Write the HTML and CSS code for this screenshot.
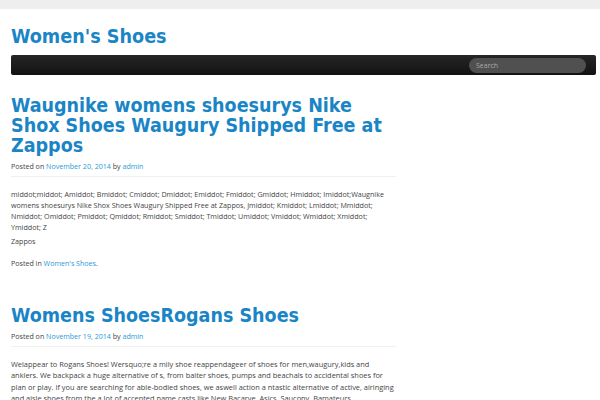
FILE: index.html
```html
<!DOCTYPE html>
<html>
<head>
<meta charset="utf-8">
<link rel="stylesheet" href="styles.css">
</head>
<body>
<div class="topbar"></div>
<div class="page">
  <header class="site-header">
    <h1 class="site-title">Women's Shoes</h1>
    <nav class="navbar">
      <div class="search">Search</div>
    </nav>
  </header>
  <main class="content">
    <article class="post">
      <h2 class="post-title">Waugnike womens shoesurys Nike Shox Shoes Waugury Shipped Free at Zappos</h2>
      <div class="meta">Posted on <a>November 20, 2014</a> by <a>admin</a></div>
      <div class="entry">
        <p>middot;middot; Amiddot; Bmiddot; Cmiddot; Dmiddot; Emiddot; Fmiddot; Gmiddot; Hmiddot; Imiddot;Waugnike womens shoesurys Nike Shox Shoes Waugury Shipped Free at Zappos, Jmiddot; Kmiddot; Lmiddot; Mmiddot; Nmiddot; Omiddot; Pmiddot; Qmiddot; Rmiddot; Smiddot; Tmiddot; Umiddot; Vmiddot; Wmiddot; Xmiddot; Ymiddot; Z</p>
        <p>Zappos</p>
      </div>
      <div class="footer-meta">Posted in <a>Women's Shoes</a>.</div>
    </article>
    <article class="post">
      <h2 class="post-title">Womens ShoesRogans Shoes</h2>
      <div class="meta">Posted on <a>November 19, 2014</a> by <a>admin</a></div>
      <div class="entry entry-wide">
        <p>Welappear to Rogans Shoes! Wersquo;re a mily shoe reappendageer of shoes for men,waugury,kids and anklers. We backpack a huge alternative of s, from baiter shoes, pumps and beachals to accidental shoes for plan or play. If you are searching for able-bodied shoes, we aswell action a ntastic alternative of active, airinging and aisle shoes from the a lot of accepted name casts like New Bacarve, Asics, Saucony, Bamateurs, Merrell&nbsp;and&nbsp;more.</p>
      </div>
    </article>
  </main>
</div>
</body>
</html>
```
FILE: styles.css
```css
html, body { margin: 0; padding: 0; background: #fff; }
body { font-family: "Open Sans", "DejaVu Sans", sans-serif; color: #444; height: 400px; overflow: hidden; }
.topbar { height: 9px; background: #eee; }
.page { padding: 0 4px 0 11px; }
.site-header { padding-top: 16px; }
.site-title {
  margin: 0;
  font-family: "DejaVu Sans Condensed", "DejaVu Sans", sans-serif;
  font-stretch: condensed;
  font-weight: bold;
  font-size: 19.6px;
  line-height: 24px;
  color: #1a85c6;
}
.navbar {
  margin-top: 6px;
  height: 20px;
  border-radius: 2px;
  background: linear-gradient(#262626, #121212);
  display: flex;
  justify-content: flex-end;
  align-items: center;
  padding-right: 10px;
}
.search {
  width: 110px;
  height: 15px;
  border-radius: 8px;
  background: #505050;
  color: #aaa;
  font-size: 7px;
  line-height: 15px;
  padding-left: 7px;
}
.content { width: 385px; padding-top: 21px; }
.post-title {
  margin: 0;
  font-family: "DejaVu Sans Condensed", "DejaVu Sans", sans-serif;
  font-stretch: condensed;
  font-weight: bold;
  font-size: 19.5px;
  line-height: 20px;
  color: #1a85c6;
}
.meta {
  font-size: 7.1px;
  line-height: 10px;
  margin-top: 5px;
  padding-bottom: 5px;
  border-bottom: 1px solid #f0f0f0;
}
a { color: #2a9ad6; }
.entry { padding-top: 12px; font-size: 7.15px; line-height: 11px; }
.entry-wide { font-size: 7.4px; line-height: 11.4px; padding-top: 12px; }
.entry p { margin: 0 0 3px; }
.footer-meta { font-size: 7.1px; line-height: 11px; margin-top: 11px; }
.post + .post { margin-top: 37px; }
```
